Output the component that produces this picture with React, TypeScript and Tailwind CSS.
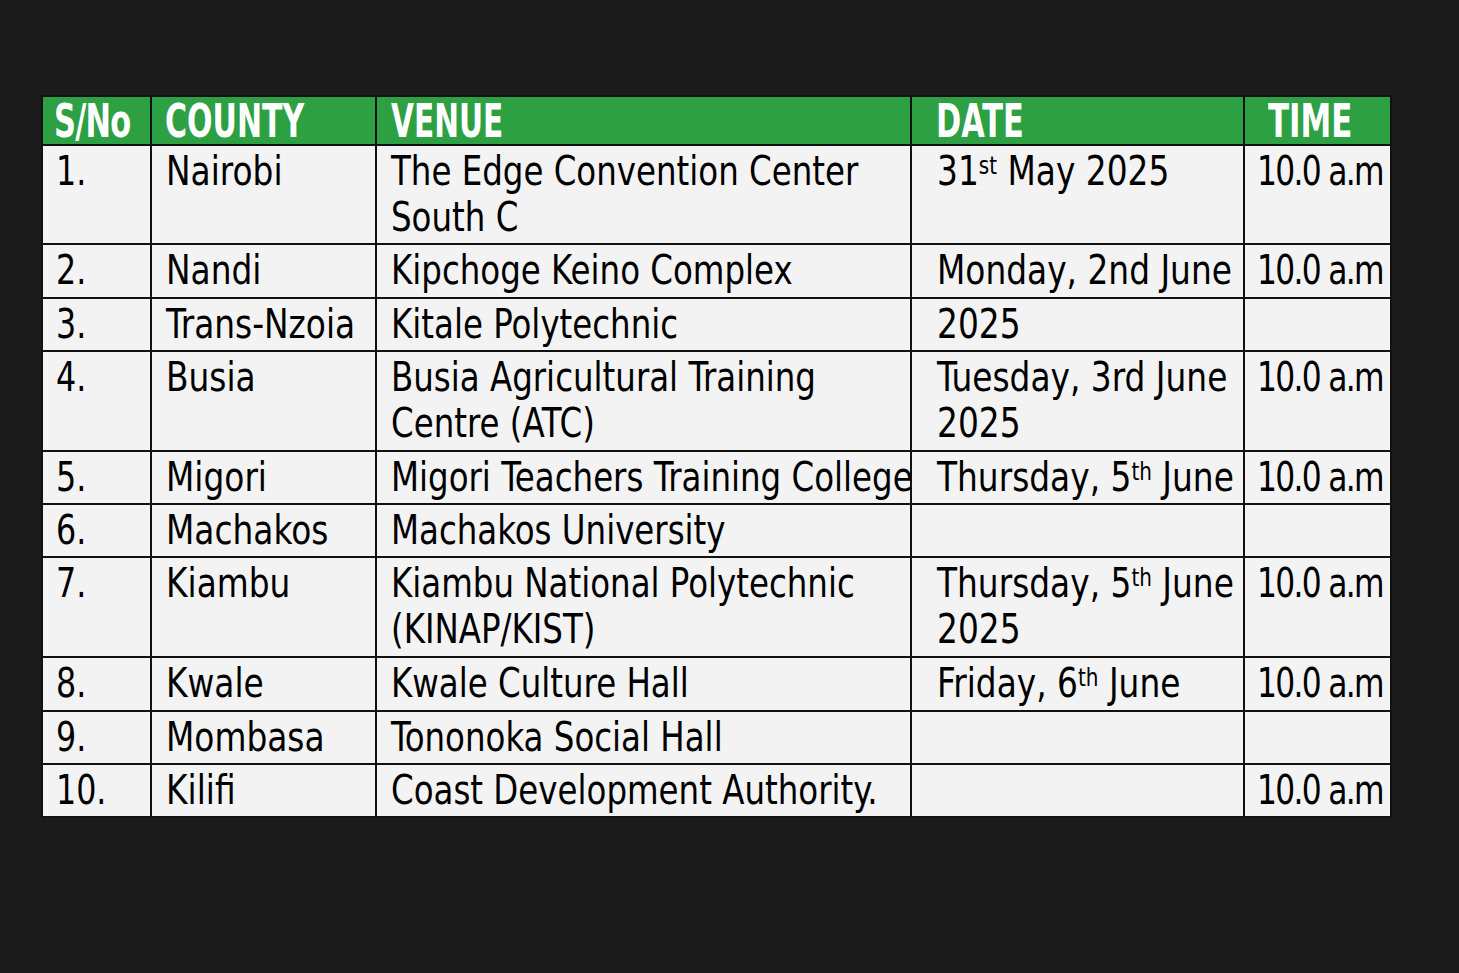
import React from "react";

type Row = {
  no: string;
  county: string;
  venue: React.ReactNode;
  date: React.ReactNode;
  time: string;
  h: string;
};

const Sup = ({ children }: { children: React.ReactNode }) => (
  <sup className="relative -top-[11px] align-baseline text-[25px] leading-none">{children}</sup>
);

const rows: Row[] = [
  {
    no: "1.",
    county: "Nairobi",
    venue: (
      <>
        The Edge Convention Center
        <br />
        South C
      </>
    ),
    date: (
      <>
        31<Sup>st</Sup> May 2025
      </>
    ),
    time: "10.0 a.m",
    h: "h-[99px]",
  },
  { no: "2.", county: "Nandi", venue: "Kipchoge Keino Complex", date: "Monday, 2nd June", time: "10.0 a.m", h: "h-[54px]" },
  { no: "3.", county: "Trans-Nzoia", venue: "Kitale Polytechnic", date: "2025", time: "", h: "h-[53px]" },
  {
    no: "4.",
    county: "Busia",
    venue: (
      <>
        Busia Agricultural Training
        <br />
        Centre (ATC)
      </>
    ),
    date: (
      <>
        Tuesday, 3rd June
        <br />
        2025
      </>
    ),
    time: "10.0 a.m",
    h: "h-[100px]",
  },
  {
    no: "5.",
    county: "Migori",
    venue: "Migori Teachers Training College",
    date: (
      <>
        Thursday, 5<Sup>th</Sup> June
      </>
    ),
    time: "10.0 a.m",
    h: "h-[53px]",
  },
  { no: "6.", county: "Machakos", venue: "Machakos University", date: "", time: "", h: "h-[53px]" },
  {
    no: "7.",
    county: "Kiambu",
    venue: (
      <>
        Kiambu National Polytechnic
        <br />
        (KINAP/KIST)
      </>
    ),
    date: (
      <>
        Thursday, 5<Sup>th</Sup> June
        <br />
        2025
      </>
    ),
    time: "10.0 a.m",
    h: "h-[100px]",
  },
  {
    no: "8.",
    county: "Kwale",
    venue: "Kwale Culture Hall",
    date: (
      <>
        Friday, 6<Sup>th</Sup> June
      </>
    ),
    time: "10.0 a.m",
    h: "h-[54px]",
  },
  { no: "9.", county: "Mombasa", venue: "Tononoka Social Hall", date: "", time: "", h: "h-[53px]" },
  { no: "10.", county: "Kilifi", venue: "Coast Development Authority.", date: "", time: "10.0 a.m", h: "h-[53px]" },
];

const font = { fontFamily: '"DejaVu Sans Condensed", "Liberation Sans Narrow", Roboto, sans-serif' };

// squeeze text horizontally to get the narrow poster look
const Txt = ({ children, className = "" }: { children: React.ReactNode; className?: string }) => (
  <span className={`inline-block origin-left whitespace-nowrap ${className}`}>{children}</span>
);

export default function App() {
  const cell = "border-2 border-[#111] align-top pt-[2px] text-[41px] leading-[46px] text-black";
  const head = "border-2 border-[#111] align-middle text-left text-[47px] leading-[42px] font-bold text-white";

  return (
    <div className="min-h-screen w-full bg-[#1b1b1b] pt-[95px] pl-[41px]" style={font}>
      <table className="w-[1349px] table-fixed border-collapse bg-[#f3f3f3]">
        <colgroup>
          <col className="w-[109px]" />
          <col className="w-[225px]" />
          <col className="w-[535px]" />
          <col className="w-[333px]" />
          <col className="w-[147px]" />
        </colgroup>
        <thead>
          <tr className="h-[49px] bg-[#2da043]">
            <th className={`${head} pl-[11px]`}>
              <Txt className="scale-x-[0.72] tracking-[-1px]">S/No</Txt>
            </th>
            <th className={`${head} pl-[13px]`}>
              <Txt className="scale-x-[0.71]">COUNTY</Txt>
            </th>
            <th className={`${head} pl-[14px]`}>
              <Txt className="scale-x-[0.7]">VENUE</Txt>
            </th>
            <th className={`${head} pl-[24px]`}>
              <Txt className="scale-x-[0.72]">DATE</Txt>
            </th>
            <th className={`${head} pl-[23px]`}>
              <Txt className="scale-x-[0.73]">TIME</Txt>
            </th>
          </tr>
        </thead>
        <tbody>
          {rows.map((r) => (
            <tr key={r.no} className={r.h}>
              <td className={`${cell} pl-[13px]`}>
                <Txt className="scale-x-[0.86]">{r.no}</Txt>
              </td>
              <td className={`${cell} pl-[14px]`}>
                <Txt className="scale-x-[0.89]">{r.county}</Txt>
              </td>
              <td className={`${cell} pl-[14px]`}>
                <Txt className="scale-x-[0.88]">{r.venue}</Txt>
              </td>
              <td className={`${cell} pl-[25px]`}>
                <Txt className="scale-x-[0.89]">{r.date}</Txt>
              </td>
              <td className={`${cell} pl-[12px]`}>
                <Txt className="scale-x-[0.85] tracking-[-2px]">{r.time}</Txt>
              </td>
            </tr>
          ))}
        </tbody>
      </table>
    </div>
  );
}
